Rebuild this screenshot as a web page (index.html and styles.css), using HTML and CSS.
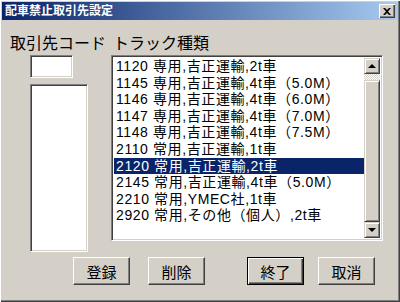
FILE: index.html
```html
<!DOCTYPE html>
<html lang="ja">
<head>
  <meta charset="UTF-8">
  <title>配車禁止取引先設定</title>
  <link rel="stylesheet" href="styles.css">
</head>
<body>

  <div class="window">
    <div class="titlebar">
      <span class="title">配車禁止取引先設定</span>
      <div class="close-btn">
        <svg width="8" height="7" viewBox="0 0 8 7"><path d="M0 0h2l2 2 2-2h2L5 3.5 8 7H6L4 5 2 7H0l3-3.5z" fill="#000"/></svg>
      </div>
    </div>

    <div class="content">
      <!-- 取引先 -->
      <div class="col-left">
        <div class="label">取引先コード</div>
        <div class="field code-box"></div>
        <div class="field code-list"></div>
      </div>

      <!-- トラック種類 -->
      <div class="col-right">
        <div class="label label-truck">トラック種類</div>
        <div class="field truck-list">
          <div class="items">
            <div class="item">1120 専用,吉正運輸,2t車</div>
            <div class="item">1145 専用,吉正運輸,4t車（5.0M）</div>
            <div class="item">1146 専用,吉正運輸,4t車（6.0M）</div>
            <div class="item">1147 専用,吉正運輸,4t車（7.0M）</div>
            <div class="item">1148 専用,吉正運輸,4t車（7.5M）</div>
            <div class="item">2110 常用,吉正運輸,1t車</div>
            <div class="item selected">2120 常用,吉正運輸,2t車</div>
            <div class="item">2145 常用,吉正運輸,4t車（5.0M）</div>
            <div class="item">2210 常用,YMEC社,1t車</div>
            <div class="item">2920 常用,その他（個人）,2t車</div>
          </div>
          <div class="scrollbar">
            <div class="sb-btn"><span class="arrow-up"></span></div>
            <div class="sb-track"></div>
            <div class="sb-thumb"></div>
            <div class="sb-btn"><span class="arrow-down"></span></div>
          </div>
        </div>
      </div>
    </div>

    <div class="buttons">
      <div class="btn-group group-edit">
        <button class="btn">登録</button>
        <button class="btn">削除</button>
      </div>
      <div class="btn-group group-close">
        <button class="btn default">終了</button>
        <button class="btn">取消</button>
      </div>
    </div>
  </div>

</body>
</html>
```

FILE: styles.css
```css
body {
  margin: 0;
  font-family: "Liberation Sans", "Noto Sans CJK JP", sans-serif;
  background: #d4d0c8;
}
.window {
  width: 400px;
  height: 302px;
  box-sizing: border-box;
  padding: 2px;
  background: #d4d0c8;
  box-shadow: inset 1px 1px #fff, inset -1px -1px #404040, inset -2px -2px #808080;
}
.titlebar {
  height: 18px;
  display: flex;
  align-items: center;
  justify-content: space-between;
  padding: 0 3px 0 3px;
  background: linear-gradient(to right, #0a246a, #a6caf0);
}
.title {
  color: white;
  font-size: 12px;
  font-weight: bold;
  line-height: 14px;
}
.close-btn {
  width: 16px;
  height: 14px;
  box-sizing: border-box;
  display: flex;
  align-items: center;
  justify-content: center;
  background: #d4d0c8;
  box-shadow: inset 1px 1px #fff, inset -1px -1px #404040, inset -2px -2px #808080;
}
.content {
  display: flex;
  padding: 15px 0 0 8px;
}
.col-left {
  width: 101px;
}
.label {
  font-size: 16px;
  line-height: 18px;
  color: #000;
  white-space: nowrap;
}
.label-truck {
  padding-left: 2px;
}
.field {
  box-sizing: border-box;
  background: #fff;
  border: 1px solid;
  border-color: #808080 #fff #fff #808080;
  box-shadow: inset 1px 1px #404040, inset -1px -1px #d4d0c8;
}
.code-box {
  width: 43px;
  height: 23px;
  margin: 2px 0 0 20px;
}
.code-list {
  width: 58px;
  height: 168px;
  margin: 6px 0 0 20px;
}
.truck-list {
  width: 272px;
  height: 186px;
  margin-top: 2px;
  padding: 2px;
  display: flex;
}
.items {
  flex: 1;
}
.item {
  height: 16.6px;
  line-height: 16.6px;
  padding-left: 2px;
  font-size: 14px;
  letter-spacing: 0.6px;
  color: #000;
  white-space: nowrap;
}
.item.selected {
  background: #0a246a;
  color: #fff;
}
.scrollbar {
  width: 16px;
  display: flex;
  flex-direction: column;
}
.sb-btn,
.sb-thumb {
  box-sizing: border-box;
  background: #d4d0c8;
  border: 1px solid;
  border-color: #d4d0c8 #404040 #404040 #d4d0c8;
  box-shadow: inset 1px 1px #fff, inset -1px -1px #808080;
}
.sb-btn {
  height: 16px;
  display: flex;
  align-items: center;
  justify-content: center;
}
.sb-track {
  height: 6px;
  background-image: repeating-conic-gradient(#fff 0 25%, #d4d0c8 0 50%);
  background-size: 2px 2px;
}
.sb-thumb {
  flex: 1;
}
.arrow-up {
  width: 0;
  height: 0;
  border-left: 4px solid transparent;
  border-right: 4px solid transparent;
  border-bottom: 4px solid #000;
}
.arrow-down {
  width: 0;
  height: 0;
  border-left: 4px solid transparent;
  border-right: 4px solid transparent;
  border-top: 4px solid #000;
}
.buttons {
  display: flex;
  margin-top: 5px;
  padding-left: 71px;
}
.btn-group {
  display: flex;
}
.group-edit {
  gap: 18px;
}
.group-close {
  gap: 14px;
  margin-left: 42px;
}
.btn {
  width: 57px;
  height: 28px;
  padding: 0;
  font-family: "Liberation Sans", "Noto Sans CJK JP", sans-serif;
  font-size: 15px;
  color: #000;
  background: #d4d0c8;
  border: 1px solid;
  border-color: #fff #404040 #404040 #fff;
  box-shadow: inset -1px -1px #808080;
}
.btn.default {
  border-color: #000;
  box-shadow: inset 1px 1px #fff, inset -1px -1px #404040, inset -2px -2px #808080;
}
```
